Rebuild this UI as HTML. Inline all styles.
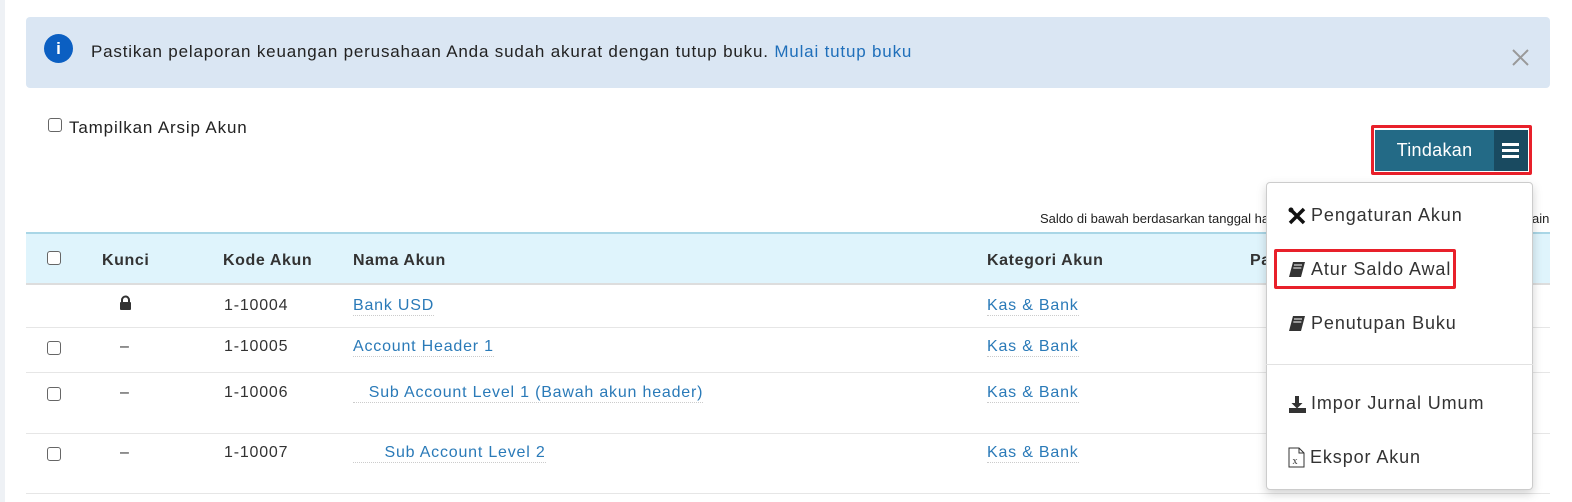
<!DOCTYPE html>
<html><head><meta charset="utf-8"><style>
*{box-sizing:border-box;margin:0;padding:0}
body{width:1572px;height:502px;overflow:hidden;background:#fff;font-family:"Liberation Sans",Arial,sans-serif;position:relative;color:#333;letter-spacing:0.8px}
.a{position:absolute;white-space:nowrap}
.cb{position:absolute;width:14px;height:14px;border:1px solid #666;border-radius:3px;background:#fff}
.lnk{color:#2a7ab8;font-size:16px;border-bottom:1px dotted #ccc}
.th{font-weight:bold;font-size:16px;color:#333;letter-spacing:0.6px}
.hr{position:absolute;left:26px;width:1524px;height:1px;background:#e6e6e6}
.mi{position:absolute;left:1288px;font-size:18px;color:#333;display:flex;align-items:center;gap:5px;letter-spacing:0.9px}
</style></head><body>
<div class="a" style="left:0;top:0;width:5px;height:502px;background:#eef1f5"></div>
<div class="a" style="left:26px;top:17px;width:1524px;height:71px;background:#dae6f3;border-radius:4px"></div>
<div class="a" style="left:44px;top:34px;width:29px;height:29px;border-radius:50%;background:#0b5fc2;color:#fff;font-size:17px;font-weight:bold;text-align:center;line-height:29px;letter-spacing:0">i</div>
<div class="a" style="left:91px;top:42px;font-size:17px;color:#222;letter-spacing:0.82px">Pastikan pelaporan keuangan perusahaan Anda sudah akurat dengan tutup buku. <span style="color:#1f6fba">Mulai tutup buku</span></div>
<svg class="a" style="left:1512px;top:49px" width="17" height="17"><path d="M1 1L16 16M16 1L1 16" stroke="#999" stroke-width="2"/></svg>
<div class="cb" style="left:48px;top:118px"></div>
<div class="a" style="left:69px;top:118px;font-size:17px;color:#222;letter-spacing:0.85px">Tampilkan Arsip Akun</div>
<div class="a" style="left:1371px;top:125px;width:161px;height:50px;border:3px solid #e8202a;border-radius:2px"></div>
<div class="a" style="left:1375px;top:130px;width:119px;height:41px;background:#236a86;color:#fff;font-size:18px;line-height:41px;text-align:center;letter-spacing:0.3px">Tindakan</div>
<div class="a" style="left:1494px;top:130px;width:34px;height:41px;background:#194a60"></div>
<div class="a" style="left:1502px;top:143px;width:17px;height:3px;background:#fff"></div>
<div class="a" style="left:1502px;top:149px;width:17px;height:3px;background:#fff"></div>
<div class="a" style="left:1502px;top:155px;width:17px;height:3px;background:#fff"></div>
<div class="a" style="left:1040px;top:211px;font-size:13px;color:#222;letter-spacing:0">Saldo di bawah berdasarkan tanggal hari ini</div>
<div class="a" style="left:1532px;top:211px;font-size:13px;color:#222;letter-spacing:0">ain</div>
<div class="a" style="left:26px;top:232px;width:1524px;height:53px;background:#dff4fc;border-top:2px solid #a9d6e6;border-bottom:2px solid #ddd"></div>
<div class="cb" style="left:47px;top:251px"></div>
<div class="a th" style="left:102px;top:252px">Kunci</div>
<div class="a th" style="left:223px;top:252px">Kode Akun</div>
<div class="a th" style="left:353px;top:252px">Nama Akun</div>
<div class="a th" style="left:987px;top:252px">Kategori Akun</div>
<div class="a th" style="left:1250px;top:252px">Pa</div>
<div class="a th" style="left:1522px;top:252px">o</div>
<div class="hr" style="top:327px"></div><div class="hr" style="top:372px"></div><div class="hr" style="top:433px"></div><div class="hr" style="top:493px"></div>
<svg class="a" style="left:119px;top:295px" width="13" height="16"><path d="M3 7V5a3.5 3.5 0 0 1 7 0v2" fill="none" stroke="#333" stroke-width="2"/><rect x="1" y="7" width="11" height="8" rx="1" fill="#333"/></svg>
<div class="a" style="left:224px;top:297px;font-size:16px">1-10004</div><div class="a lnk" style="left:353px;top:297px">Bank USD</div><div class="a lnk" style="left:987px;top:297px">Kas &amp; Bank</div>
<div class="cb" style="left:47px;top:341px"></div><div class="a" style="left:120px;top:338px;font-size:16px">–</div>
<div class="a" style="left:224px;top:338px;font-size:16px">1-10005</div><div class="a lnk" style="left:353px;top:338px">Account Header 1</div><div class="a lnk" style="left:987px;top:338px">Kas &amp; Bank</div>
<div class="cb" style="left:47px;top:387px"></div><div class="a" style="left:120px;top:384px;font-size:16px">–</div>
<div class="a" style="left:224px;top:384px;font-size:16px">1-10006</div><div class="a lnk" style="left:353px;top:384px">&nbsp;&nbsp;&nbsp;Sub Account Level 1 (Bawah akun header)</div><div class="a lnk" style="left:987px;top:384px">Kas &amp; Bank</div>
<div class="cb" style="left:47px;top:447px"></div><div class="a" style="left:120px;top:444px;font-size:16px">–</div>
<div class="a" style="left:224px;top:444px;font-size:16px">1-10007</div><div class="a lnk" style="left:353px;top:444px">&nbsp;&nbsp;&nbsp;&nbsp;&nbsp;&nbsp;Sub Account Level 2</div><div class="a lnk" style="left:987px;top:444px">Kas &amp; Bank</div>
<div class="a" style="left:1266px;top:182px;width:267px;height:308px;background:#fff;border:1px solid #ccc;border-radius:4px;box-shadow:0 4px 10px rgba(0,0,0,.18)"></div>
<div class="a" style="left:1266px;top:364px;width:267px;height:1px;background:#e2e2e2"></div>
<div class="a" style="left:1274px;top:249px;width:182px;height:40px;border:3px solid #e8202a;border-radius:2px"></div>
<div class="mi" style="top:205px"><svg width="18" height="18"><path d="M2 2L16 16M16 2L2 16" stroke="#111" stroke-width="3.5"/><circle cx="3" cy="3" r="2.5" fill="#111"/></svg>Pengaturan Akun</div>
<div class="mi" style="top:259px"><svg width="18" height="17"><path d="M5 1H17L13 16H1Z" fill="#333"/><path d="M6 4H14M5.3 7H13.3" stroke="#fff" stroke-width="1"/></svg>Atur Saldo Awal</div>
<div class="mi" style="top:313px"><svg width="18" height="17"><path d="M5 1H17L13 16H1Z" fill="#333"/><path d="M6 4H14M5.3 7H13.3" stroke="#fff" stroke-width="1"/></svg>Penutupan Buku</div>
<div class="mi" style="top:393px"><svg width="18" height="18"><path d="M7 1h4v7h3.5l-5.5 5.5L3.5 8H7z" fill="#333"/><rect x="1" y="13" width="17" height="5" fill="#333"/></svg>Impor Jurnal Umum</div>
<div class="mi" style="top:447px"><svg width="17" height="21"><path d="M1 1H11L16 6V20H1Z" fill="none" stroke="#333"/><path d="M11 1V6H16" fill="none" stroke="#333"/><text x="4.5" y="17" font-size="10" font-family="Liberation Serif" fill="#333">x</text></svg>Ekspor Akun</div>
</body></html>
